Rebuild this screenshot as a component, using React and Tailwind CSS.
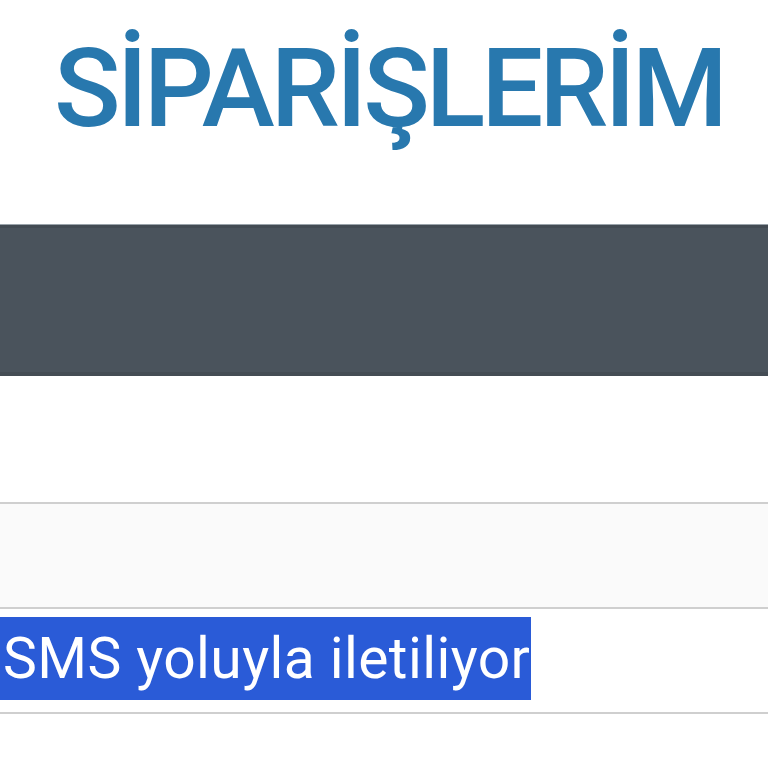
export default function App() {
  return (
    <div className="min-h-[768px] w-[768px] overflow-hidden bg-white font-['Roboto',sans-serif]">
      {/* Title */}
      <div className="flex h-[224px] justify-center pl-[10px] pt-[24px]">
        <h1 className="text-[110px] font-medium leading-[130px] tracking-[-4px] text-[#2878ae]">
          SİPARİŞLERİM
        </h1>
      </div>

      {/* Header bar */}
      <div className="h-[152px] border-t border-[#9aa3aa] bg-[#4a535c] shadow-[inset_0_3px_0_#434b53,inset_0_-4px_0_#444c54]" />

      <div className="h-[126px]" />

      {/* Table rows */}
      <div className="border-t-2 border-[#cfcfcf]">
        <div className="h-[103px] bg-[#fafafa]" />
        <div className="flex h-[105px] items-start border-t-2 border-[#cfcfcf] pt-[8px]">
          <span className="inline-block h-[83px] whitespace-nowrap bg-[#2a5bd7] pl-[3px] pr-[1px] text-[57px] leading-[83px] tracking-[0.4px] text-white">
            SMS yoluyla iletiliyor
          </span>
        </div>
        <div className="border-t-2 border-[#cfcfcf]" />
      </div>
    </div>
  );
}
